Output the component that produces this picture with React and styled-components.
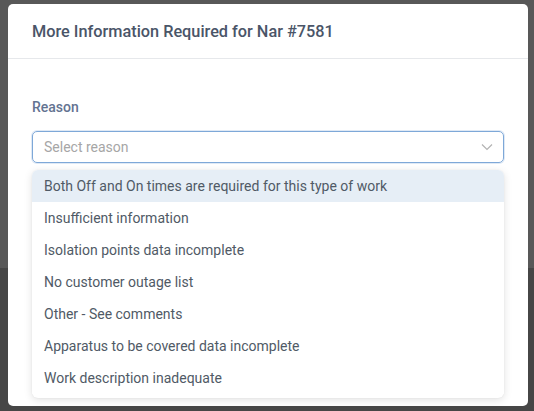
import React, { useState } from 'react';
import styled, { createGlobalStyle } from 'styled-components';

const GlobalStyle = createGlobalStyle`
  html, body {
    margin: 0;
    padding: 0;
    height: 100%;
  }
  body {
    font-family: Roboto, 'Liberation Sans', sans-serif;
    background: #474747;
  }
`;

const Backdrop = styled.div`
  width: 534px;
  height: 411px;
  background: linear-gradient(to bottom, #585858 0, #585858 268px, #464646 268px);
  padding: 4px 6px 0 8px;
  box-sizing: border-box;
  overflow: hidden;
`;

const Modal = styled.div`
  width: 520px;
  height: 402px;
  background: #fff;
  border-radius: 5px;
  display: flex;
  flex-direction: column;
`;

const Header = styled.div`
  height: 54px;
  padding: 0 24px;
  display: flex;
  align-items: center;
  border-bottom: 1px solid #e6e8eb;
  font-size: 16.3px;
  font-weight: 500;
  color: #4a5568;
`;

const Body = styled.div`
  padding: 38px 24px 0;
`;

const Label = styled.div`
  font-size: 14px;
  font-weight: 500;
  color: #637391;
  line-height: 20px;
  margin-bottom: 14px;
`;

const Select = styled.div`
  position: relative;
  height: 32px;
  box-sizing: border-box;
  border: 1px solid #7ea8d8;
  border-radius: 5px;
  box-shadow: 0 0 0 1px rgba(126, 168, 216, 0.25);
  display: flex;
  align-items: center;
  justify-content: space-between;
  padding: 0 10px 0 11px;
  font-size: 14px;
  color: #a6a6a6;
`;

const Menu = styled.ul`
  list-style: none;
  margin: 7px 0 0;
  padding: 0 0 4px;
  background: #fff;
  border-radius: 6px;
  box-shadow: 0 2px 8px rgba(0, 0, 0, 0.12), 0 0 2px rgba(0, 0, 0, 0.06);
  overflow: hidden;
`;

const Option = styled.li`
  height: 32px;
  display: flex;
  align-items: center;
  padding: 0 12px;
  font-size: 14px;
  color: #505a66;
  background: ${(p) => (p.$active ? '#e6eef6' : '#fff')};
  cursor: pointer;
`;

const reasons = [
  'Both Off and On times are required for this type of work',
  'Insufficient information',
  'Isolation points data incomplete',
  'No customer outage list',
  'Other - See comments',
  'Apparatus to be covered data incomplete',
  'Work description inadequate',
];

const Chevron = () => (
  <svg width="12" height="8" viewBox="0 0 12 8" fill="none">
    <path d="M1 1.5 6 6.5 11 1.5" stroke="#b3b3b3" strokeWidth="1.2" />
  </svg>
);

const App = () => {
  const [active, setActive] = useState(0);

  return (
    <>
      <GlobalStyle />
      <Backdrop>
        <Modal>
          <Header>More Information Required for Nar #7581</Header>
          <Body>
            <Label>Reason</Label>
            <Select>
              <span>Select reason</span>
              <Chevron />
            </Select>
            <Menu>
              {reasons.map((r, i) => (
                <Option key={r} $active={i === active} onMouseEnter={() => setActive(i)}>
                  {r}
                </Option>
              ))}
            </Menu>
          </Body>
        </Modal>
      </Backdrop>
    </>
  );
};

export default App;
